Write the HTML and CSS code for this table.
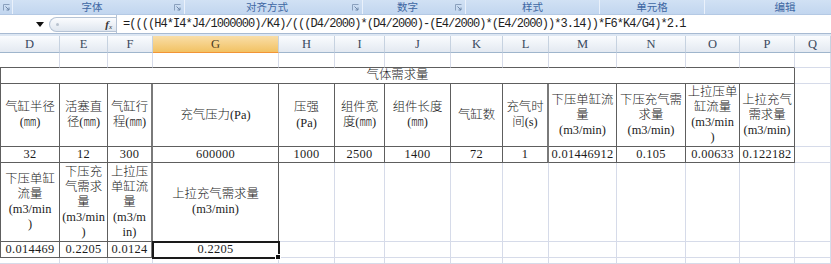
FILE: index.html
```html
<!DOCTYPE html>
<html lang="zh">
<head>
<meta charset="utf-8">
<title>气体需求量</title>
<link rel="stylesheet" href="styles.css">
</head>
<body>
<div class="ribbon">
  <div class="grp g0"><span class="launch"><svg width="7" height="7" viewBox="0 0 7 7"><path d="M0.5 6.5V0.5H6.5" fill="none" stroke="#8aa0bd"/><path d="M2.5 2.5L6 6M6 3.5V6H3.5" fill="none" stroke="#6f87a8"/></svg></span></div>
  <div class="grp g1"><span class="lbl">字体</span><span class="launch"><svg width="7" height="7" viewBox="0 0 7 7"><path d="M0.5 6.5V0.5H6.5" fill="none" stroke="#8aa0bd"/><path d="M2.5 2.5L6 6M6 3.5V6H3.5" fill="none" stroke="#6f87a8"/></svg></span></div>
  <div class="grp g2"><span class="lbl">对齐方式</span><span class="launch"><svg width="7" height="7" viewBox="0 0 7 7"><path d="M0.5 6.5V0.5H6.5" fill="none" stroke="#8aa0bd"/><path d="M2.5 2.5L6 6M6 3.5V6H3.5" fill="none" stroke="#6f87a8"/></svg></span></div>
  <div class="grp g3"><span class="lbl">数字</span><span class="launch"><svg width="7" height="7" viewBox="0 0 7 7"><path d="M0.5 6.5V0.5H6.5" fill="none" stroke="#8aa0bd"/><path d="M2.5 2.5L6 6M6 3.5V6H3.5" fill="none" stroke="#6f87a8"/></svg></span></div>
  <div class="grp g4"><span class="lbl">样式</span></div>
  <div class="grp g5"><span class="lbl">单元格</span></div>
  <div class="grp g6"><span class="lbl">编辑</span></div>
</div>
<div class="fbar">
  <div class="namebox"><svg width="8" height="5" viewBox="0 0 8 5"><path d="M0 0H8L4 5Z" fill="#111"/></svg></div>
  <div class="fxbtn"><span class="dot"></span><span class="fx"><i>f</i><sub>x</sub></span></div>
  <div class="formula">=((((H4*I4*J4/1000000)/K4)/(((D4/2000)*(D4/2000)-(E4/2000)*(E4/2000))*3.14))*F6*K4/G4)*2.1</div>
</div>
<div class="strip"></div>
<div class="cols colhdr">
  <div class="ch">D</div><div class="ch">E</div><div class="ch">F</div><div class="ch sel">G</div><div class="ch">H</div><div class="ch">I</div><div class="ch">J</div><div class="ch">K</div><div class="ch">L</div><div class="ch">M</div><div class="ch">N</div><div class="ch">O</div><div class="ch">P</div><div class="ch">Q</div>
</div>
<div class="cols sheet">
  <!-- row 1 -->
  <div class="c top"></div><div class="c top"></div><div class="c top"></div><div class="c top"></div><div class="c top"></div><div class="c top"></div><div class="c top"></div><div class="c top"></div><div class="c top"></div><div class="c top"></div><div class="c top"></div><div class="c top"></div><div class="c top"></div><div class="c"></div>
  <!-- title -->
  <div class="c b bl title">气体需求量</div><div class="c"></div>
  <!-- header -->
  <div class="c b bl">气缸半径<br>(㎜)</div>
  <div class="c b">活塞直<br>径(㎜)</div>
  <div class="c b r2">气缸行<br>程(㎜)</div>
  <div class="c b">充气压力(Pa)</div>
  <div class="c b pa">压强<br>(Pa)</div>
  <div class="c b">组件宽<br>度(㎜)</div>
  <div class="c b">组件长度<br>(㎜)</div>
  <div class="c b">气缸数</div>
  <div class="c b r2">充气时<br>间(s)</div>
  <div class="c b">下压单缸流<br>量<br>(m3/min)</div>
  <div class="c b">下压充气需<br>求量<br>(m3/min)</div>
  <div class="c b">上拉压单<br>缸流量<br>(m3/min<br>)</div>
  <div class="c b">上拉充气<br>需求量<br>(m3/min)</div>
  <div class="c"></div>
  <!-- data -->
  <div class="c b bl n">32</div>
  <div class="c b n">12</div>
  <div class="c b r2 n">300</div>
  <div class="c b n">600000</div>
  <div class="c b n">1000</div>
  <div class="c b n">2500</div>
  <div class="c b n">1400</div>
  <div class="c b n">72</div>
  <div class="c b r2 n">1</div>
  <div class="c b n">0.01446912</div>
  <div class="c b n">0.105</div>
  <div class="c b n">0.00633</div>
  <div class="c b n">0.122182</div>
  <div class="c"></div>
  <!-- header 2 -->
  <div class="c b bl">下压单缸<br>流量<br>(m3/min<br>)</div>
  <div class="c b">下压充<br>气需求<br>量<br>(m3/min<br>)</div>
  <div class="c b r2">上拉压<br>单缸流<br>量<br>(m3/m<br>in)</div>
  <div class="c b">上拉充气需求量<br>(m3/min)</div>
  <div class="c"></div><div class="c"></div><div class="c"></div><div class="c"></div><div class="c"></div><div class="c"></div><div class="c"></div><div class="c"></div><div class="c"></div><div class="c"></div>
  <!-- data 2 -->
  <div class="c b bl n">0.014469</div>
  <div class="c b n">0.2205</div>
  <div class="c b r2 n">0.0124</div>
  <div class="c b n sel">0.2205</div>
  <div class="c"></div><div class="c"></div><div class="c"></div><div class="c"></div><div class="c"></div><div class="c"></div><div class="c"></div><div class="c"></div><div class="c"></div><div class="c"></div>
  <!-- last -->
  <div class="c"></div><div class="c"></div><div class="c"></div><div class="c"></div><div class="c"></div><div class="c"></div><div class="c"></div><div class="c"></div><div class="c"></div><div class="c"></div><div class="c"></div><div class="c"></div><div class="c"></div><div class="c"></div>
</div>
</body>
</html>
```
FILE: styles.css
```css
html, body {
  margin: 0;
  padding: 0;
  background: #fff;
}
body {
  width: 831px;
  height: 264px;
  overflow: hidden;
  font-family: "Liberation Serif", "Noto Sans CJK SC", serif;
}

/* ribbon group labels */
.ribbon {
  display: flex;
  height: 15px;
  box-sizing: border-box;
  background: linear-gradient(#d1e1f4, #c2d6ef);
  border-bottom: 1px solid #b4c9e4;
  overflow: hidden;
}
.grp {
  display: flex;
  align-items: center;
  flex: none;
  box-sizing: border-box;
  border-right: 1px solid #eaf1fb;
  height: 14px;
}
.g0 { width: 13px; }
.g1 { width: 172px; }
.g2 { width: 178px; }
.g3 { width: 103px; }
.g4 { width: 134px; }
.g5 { width: 105px; }
.g6 { width: 160px; border-right: none; }
.lbl {
  flex: 1;
  text-align: center;
  font-family: "Noto Sans CJK SC", sans-serif;
  font-size: 10.5px;
  line-height: 14px;
  color: #3e67a3;
}
.launch {
  width: 13px;
  display: flex;
  justify-content: center;
  align-items: center;
  height: 14px;
}

/* formula bar */
.fbar {
  display: flex;
  height: 19px;
  box-sizing: border-box;
  border-bottom: 1px solid #a7bad2;
  background: #fff;
}
.namebox {
  width: 49px;
  display: flex;
  align-items: center;
  justify-content: flex-end;
  padding-right: 5px;
  box-sizing: border-box;
}
.fxbtn {
  width: 67px;
  box-sizing: border-box;
  margin: 2px 0 1px;
  border: 1px solid #b5c3d5;
  border-right: none;
  border-radius: 8px 0 0 8px;
  background: linear-gradient(#fbfcfe, #dfe6ef);
  display: flex;
  align-items: center;
  justify-content: space-between;
  padding: 0 4px 0 6px;
}
.dot {
  width: 3px;
  height: 3px;
  border-radius: 50%;
  background: #b9c3cf;
}
.fx {
  font-family: "Liberation Serif", serif;
  font-size: 11px;
  color: #333;
  line-height: 1;
}
.fx i { font-weight: bold; }
.fx sub { font-size: 7px; font-style: italic; vertical-align: -1px; }
.formula {
  flex: 1;
  border-left: 1px solid #b5c3d5;
  padding-left: 6px;
  font-family: "Liberation Mono", monospace;
  font-size: 12px;
  letter-spacing: -0.95px;
  line-height: 18px;
  color: #1e1e1e;
  white-space: nowrap;
  overflow: hidden;
}
.strip {
  height: 2px;
  background: #dde7f3;
}

/* grid columns */
.cols {
  display: grid;
  grid-template-columns: 60px 48px 45px 126px 56px 50px 66px 52px 46px 68px 69px 54px 55px 36px;
}
.colhdr { height: 17px; }
.ch {
  box-sizing: border-box;
  background: linear-gradient(#fafcfe, #e3e9f1);
  border-right: 1px solid #c6d2e0;
  border-bottom: 1px solid #9fb5cc;
  text-align: center;
  font-size: 12.5px;
  line-height: 16px;
  color: #3a4a5e;
}
.ch.sel {
  background: linear-gradient(#f9dea8, #f2c263);
  border-bottom-color: #f29436;
  color: #4a3a20;
}

.sheet {
  grid-template-rows: 15px 16px 63px 16px 79px 16px 6px;
}
.c {
  box-sizing: border-box;
  border-right: 1px solid #d6dbe9;
  border-bottom: 1px solid #d6dbe9;
  display: flex;
  align-items: center;
  justify-content: center;
  text-align: center;
  font-size: 12.4px;
  line-height: 15px;
  color: #1c1c1c;
  font-weight: 300;
  overflow: hidden;
  white-space: nowrap;
}
.c.top { border-bottom-color: #5e5e5e; }
.c.b {
  border-right-color: #5e5e5e;
  border-bottom-color: #5e5e5e;
}
.c.bl { border-left: 1px solid #5e5e5e; }
.c.r2 { border-right: 2px solid #7a7a7a; }
.title { grid-column: span 13; }
.n { letter-spacing: 0.3px; }
.c.pa { line-height: 16px; }
.c.sel {
  position: relative;
  overflow: visible;
  outline: 2px solid #1a1a1a;
  outline-offset: -1px;
}
.c.sel::after {
  content: "";
  position: absolute;
  right: -3px;
  bottom: -3px;
  width: 4px;
  height: 4px;
  background: #111;
  border: 1px solid #fff;
}
```
